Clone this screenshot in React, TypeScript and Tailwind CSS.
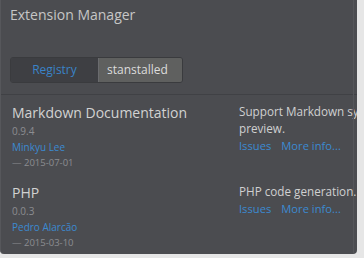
import React from 'react';

const font = { fontFamily: '"Open Sans", "Noto Sans", sans-serif' };

type Ext = {
  name: string;
  version: string;
  author: string;
  date: string;
  desc: string[];
};

const exts: Ext[] = [
  {
    name: 'Markdown Documentation',
    version: '0.9.4',
    author: 'Minkyu Lee',
    date: '— 2015-07-01',
    desc: ['Support Markdown syntax and', 'preview.'],
  },
  {
    name: 'PHP',
    version: '0.0.3',
    author: 'Pedro Alarcão',
    date: '— 2015-03-10',
    desc: ['PHP code generation.'],
  },
];

const Row = ({ ext, first }: { ext: Ext; first: boolean }) => (
  <div className={`flex ${first ? 'pt-2 pb-3' : 'pt-0'}`}>
    <div className="w-[238px] shrink-0 pl-[11px]">
      <div className="text-[14px] leading-[20px] text-[#d2d2d2] whitespace-nowrap">{ext.name}</div>
      <div className="text-[10px] leading-[16px] text-[#8c8d90]">{ext.version}</div>
      <div className="text-[10px] leading-[16px] text-[#3b8ad0]">{ext.author}</div>
      <div className="text-[9.5px] leading-[16px] text-[#8c8d90]">{ext.date}</div>
    </div>
    <div className="flex-1 min-w-0 overflow-hidden">
      {ext.desc.map((d) => (
        <div key={d} className="text-[11.7px] leading-[17px] text-[#d0d0d0] whitespace-nowrap">
          {d}
        </div>
      ))}
      <div className="flex gap-[10px] text-[11.2px] leading-[17px] text-[#3b8ad0]">
        <span>Issues</span>
        <span>More info...</span>
      </div>
    </div>
  </div>
);

export default function App() {
  return (
    <div className="w-[364px] h-[258px] bg-[#e6e6e6] overflow-hidden" style={font}>
      <div className="relative w-[357px] h-[254px] bg-[#4b4c50] rounded-b-[4px] border-l border-[#56575b] overflow-hidden">
        <div className="absolute top-0 bottom-0 right-[3px] w-px bg-[#55565a]" />
        <div className="pl-[9px] pt-[5px] text-[14px] leading-[20px] text-[#c6c6c6]">Extension Manager</div>
        <div className="pl-[9px] pt-[32px]">
          <div className="flex w-[173px] h-[26px] rounded-[3px] border border-[#3a3b3e] overflow-hidden text-[12px]">
            <div className="w-[87px] flex items-center justify-center bg-[#3e3f43] text-[#3a83c8]">Registry</div>
            <div className="flex-1 flex items-center justify-center bg-[#5f605f] border-l border-[#6a6b6e] text-[#dcdcdc] pr-[6px]">
              stanstalled
            </div>
          </div>
        </div>
        <div className="mt-[11px] h-px bg-[#404145]" />
        {exts.map((e, i) => (
          <Row key={e.name} ext={e} first={i === 0} />
        ))}
      </div>
    </div>
  );
}
